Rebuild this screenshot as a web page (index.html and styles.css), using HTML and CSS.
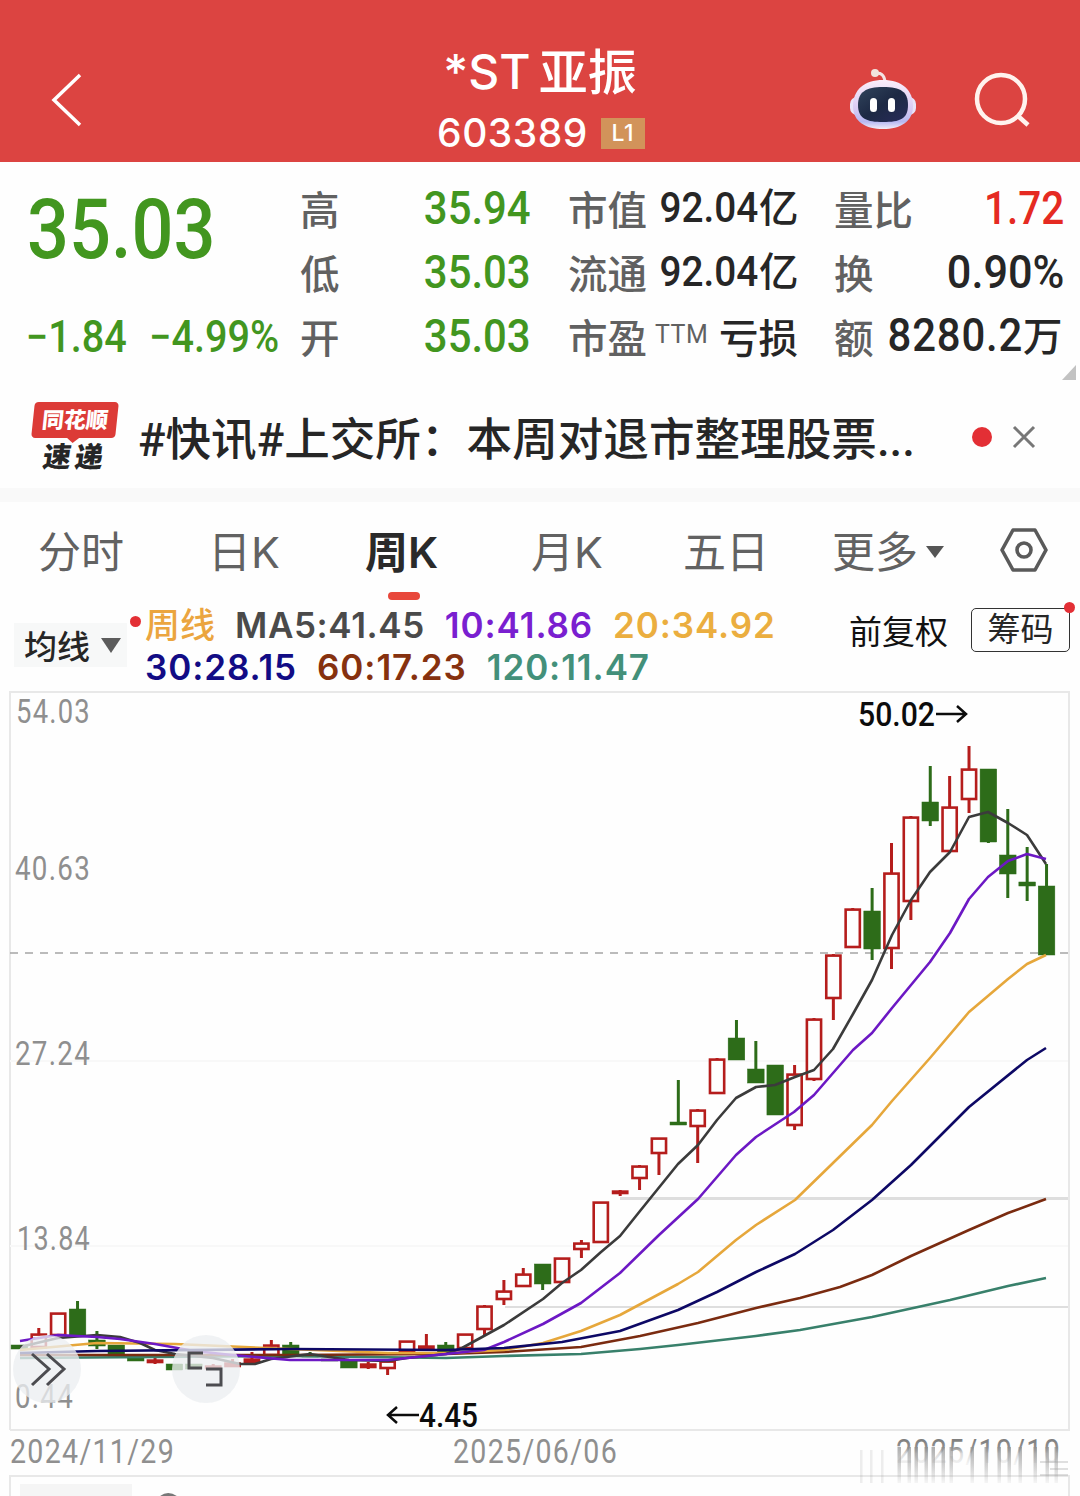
FILE: index.html
```html
<!DOCTYPE html>
<html lang="zh-CN">
<head>
    <meta charset="UTF-8">
    <meta name="viewport" content="width=device-width, initial-scale=1.0">
    <title>*ST亚振 603389</title>
    <link rel="stylesheet" href="styles.css">
</head>
<body>
    <div class="header">
        <svg class="back" width="34" height="56" viewBox="0 0 34 56"><path d="M30 3L4 28L30 53"/></svg>
        <div class="title">
            <div class="name"><span class="st">*ST</span><span class="han">亚振</span></div>
            <div class="code"><span>603389</span><span class="level">L1</span></div>
        </div>
        <div class="tools">
            <svg width="68" height="64" viewBox="0 0 68 64">
                <defs>
                    <linearGradient id="shell" x1="0" y1="0" x2="0" y2="1">
                        <stop offset="0" stop-color="#fbeefa"/>
                        <stop offset="0.6" stop-color="#d8c9f3"/>
                        <stop offset="0.85" stop-color="#b6b8f2"/>
                        <stop offset="1" stop-color="#f4eef8"/>
                    </linearGradient>
                    <linearGradient id="face" x1="0" y1="0" x2="1" y2="1">
                        <stop offset="0" stop-color="#31445c"/>
                        <stop offset="0.5" stop-color="#1d2944"/>
                        <stop offset="1" stop-color="#282b5a"/>
                    </linearGradient>
                </defs>
                <path d="M25 7Q35 4 36 15" fill="none" stroke="#f3e4e4" stroke-width="3"/>
                <circle cx="26" cy="6" r="4" fill="#f1e3dc"/>
                <rect x="1" y="30" width="66" height="18" rx="7" fill="#e9e3f8"/>
                <path d="M34 13C53 13 64 23 64 39C64 55 51 62 34 62C17 62 4 55 4 39C4 23 15 13 34 13Z" fill="url(#shell)"/>
                <path d="M34 20C52 20 59 25 59 38C59 52 51 55 34 55C18 55 9 52 9 38C9 25 17 20 34 20Z" fill="url(#face)"/>
                <rect x="21" y="31" width="7" height="14" rx="3.5" fill="#fff"/>
                <rect x="39" y="31" width="7" height="14" rx="3.5" fill="#fff"/>
            </svg>
            <svg class="search" width="58" height="58" viewBox="0 0 58 58">
                <circle cx="27" cy="27" r="24"/>
                <path d="M44 44L54 53"/>
            </svg>
        </div>
    </div>

    <div class="quote">
        <div class="price">
            <div class="last">35.03</div>
            <div class="change"><span>−1.84</span><span>−4.99%</span></div>
        </div>
        <div class="col">
            <div class="row"><label>高</label><b class="down">35.94</b></div>
            <div class="row"><label>低</label><b class="down">35.03</b></div>
            <div class="row"><label>开</label><b class="down">35.03</b></div>
        </div>
        <div class="col">
            <div class="row"><label>市值</label><b class="small">92.04<i>亿</i></b></div>
            <div class="row"><label>流通</label><b class="small">92.04<i>亿</i></b></div>
            <div class="row"><label>市盈<sup>TTM</sup></label><b class="small loss"><i>亏损</i></b></div>
        </div>
        <div class="col">
            <div class="row"><label>量比</label><b class="up">1.72</b></div>
            <div class="row"><label>换</label><b class="rate">0.90%</b></div>
            <div class="row"><label>额</label><b class="amount">8280.2<i>万</i></b></div>
        </div>
        <div class="corner"></div>
    </div>

    <div class="news">
        <div class="brand">
            <div class="brand-top">同花顺</div>
            <div class="brand-bottom">速递</div>
        </div>
        <div class="headline">#快讯#上交所：本周对退市整理股票...</div>
        <span class="dot"></span>
        <svg class="close" width="24" height="24" viewBox="0 0 24 24"><path d="M2 2L22 22M22 2L2 22"/></svg>
    </div>

    <div class="tabs">
        <span>分时</span>
        <span>日K</span>
        <span class="active">周K</span>
        <span>月K</span>
        <span>五日</span>
        <span>更多<em></em></span>
        <svg width="48" height="44" viewBox="0 0 48 44">
            <path d="M13 2H35L46 22L35 42H13L2 22Z"/>
            <circle cx="24" cy="22" r="7"/>
        </svg>
    </div>

    <div class="average">
        <div class="picker">均线<em></em><span class="dot"></span></div>
        <div class="values">
            <div class="line">
                <span class="period">周线</span>
                <span class="ma5">MA5:41.45</span>
                <span class="ma10">10:41.86</span>
                <span class="ma20">20:34.92</span>
            </div>
            <div class="line">
                <span class="ma30">30:28.15</span>
                <span class="ma60">60:17.23</span>
                <span class="ma120">120:11.47</span>
            </div>
        </div>
        <div class="adjust">前复权</div>
        <div class="chips">筹码<span class="dot"></span></div>
    </div>

    <svg class="chart" width="1080" height="806" viewBox="0 690 1080 806">
        <defs>
            <linearGradient id="date-fade" gradientUnits="userSpaceOnUse" x1="0" y1="1438" x2="0" y2="1464">
                <stop offset="0" stop-color="#7c7c7c"/>
                <stop offset="0.35" stop-color="#8f8f8f"/>
                <stop offset="0.6" stop-color="#8f8f8f" stop-opacity="0.3"/>
                <stop offset="1" stop-color="#8f8f8f" stop-opacity="0.1"/>
            </linearGradient>
            <linearGradient id="fade" x1="0" y1="0" x2="0" y2="1">
                <stop offset="0" stop-color="#8c8c8c" stop-opacity="0.7"/>
                <stop offset="0.5" stop-color="#8c8c8c" stop-opacity="0.4"/>
                <stop offset="1" stop-color="#8c8c8c" stop-opacity="0.08"/>
            </linearGradient>
        </defs>
        <g class="frame">
            <path d="M10 1430V692H1069V1430H10"/>
            <path d="M10 1496V1476H1069V1496"/>
        </g>
        <path class="grid faint" d="M10 1246H1068M10 1061H1068"/>
        <path class="grid" d="M620 1198.5H1068"/>
        <path class="grid thin" d="M505 1307H1068"/>
        <path class="current" d="M10 953H1068"/>
        <g id="candles"></g>
        <g id="lines"></g>
        <g class="axis">
            <text x="16" y="723" textLength="75" lengthAdjust="spacingAndGlyphs">54.03</text>
            <text x="15" y="880" textLength="76" lengthAdjust="spacingAndGlyphs">40.63</text>
            <text x="15" y="1065" textLength="76" lengthAdjust="spacingAndGlyphs">27.24</text>
            <text x="17" y="1250" textLength="74" lengthAdjust="spacingAndGlyphs">13.84</text>
            <text x="15" y="1408" textLength="59" lengthAdjust="spacingAndGlyphs">0.44</text>
            <text x="10" y="1463" textLength="165" lengthAdjust="spacingAndGlyphs">2024/11/29</text>
            <text x="453" y="1463" textLength="165" lengthAdjust="spacingAndGlyphs">2025/06/06</text>
            <text class="end-date" x="896" y="1463" textLength="165" lengthAdjust="spacingAndGlyphs">2025/10/10</text>
        </g>
        <g class="mark">
            <text x="858" y="726" textLength="77" lengthAdjust="spacingAndGlyphs">50.02</text>
            <text x="419" y="1427" textLength="59" lengthAdjust="spacingAndGlyphs">4.45</text>
            <path d="M936 714H965M957 706L966 714L957 722"/>
            <path d="M419 1415H389M397 1407L388 1415L397 1423"/>
        </g>
        <g id="streaks"></g>
        <path class="edge" d="M1040 1462H1068M1050 1469H1068M1040 1475H1068"/>
        <g class="control">
            <circle cx="47" cy="1369" r="34"/>
            <path d="M32 1354L49 1369L32 1385M47 1354L64 1369L47 1385"/>
            <circle cx="206" cy="1369" r="34"/>
            <path d="M203 1353H189V1368H202M206 1369H221V1385H206"/>
        </g>
        <rect class="tag" x="20" y="1484" width="112" height="12"/>
        <path class="peek" d="M160 1498Q168 1491 177 1498"/>
    </svg>

    <script>
        // high, body top, body bottom, low, rising
        const candles = [
            [1345, 1345, 1349, 1349, 0], [1328, 1334, 1347, 1347, 1], [1313, 1313, 1335, 1335, 1],
            [1301, 1309, 1335, 1335, 0], [1331, 1340, 1346, 1349, 0], [1345, 1345, 1356, 1356, 0],
            [1358, 1358, 1361, 1361, 0], [1355, 1360, 1362, 1364, 1], [1364, 1364, 1370, 1370, 0],
            [1364, 1364, 1369, 1369, 0], [1364, 1366, 1368, 1369, 1], [1359, 1363, 1366, 1366, 1],
            [1352, 1359, 1362, 1363, 1], [1340, 1345, 1355, 1355, 1], [1342, 1345, 1356, 1356, 0],
            [1352, 1355, 1357, 1357, 0], [1359, 1359, 1361, 1361, 0], [1361, 1361, 1368, 1368, 0],
            [1362, 1364, 1367, 1369, 1], [1361, 1361, 1368, 1375, 1], [1341, 1341, 1351, 1351, 1],
            [1334, 1346, 1348, 1348, 1], [1342, 1345, 1352, 1352, 0], [1334, 1334, 1348, 1348, 1],
            [1305, 1306, 1329, 1335, 1], [1280, 1291, 1299, 1305, 1], [1268, 1274, 1286, 1287, 1],
            [1264, 1264, 1284, 1290, 0], [1258, 1258, 1282, 1282, 1], [1240, 1243, 1249, 1258, 1],
            [1202, 1202, 1242, 1242, 1], [1190, 1191, 1193, 1196, 1], [1165, 1166, 1178, 1190, 1],
            [1138, 1138, 1153, 1175, 1], [1080, 1122, 1125, 1125, 0], [1109, 1110, 1126, 1163, 1],
            [1058, 1059, 1093, 1094, 1], [1020, 1038, 1060, 1060, 0], [1041, 1069, 1083, 1083, 0],
            [1065, 1065, 1115, 1115, 0], [1065, 1074, 1125, 1130, 1], [1018, 1019, 1079, 1081, 1],
            [954, 955, 998, 1020, 1], [908, 909, 947, 948, 1], [888, 911, 949, 960, 0],
            [843, 873, 948, 969, 1], [816, 817, 901, 920, 1], [766, 802, 821, 826, 0],
            [776, 807, 851, 852, 1], [746, 769, 799, 813, 1], [769, 769, 842, 843, 0],
            [809, 855, 874, 898, 0], [847, 882, 886, 901, 0], [864, 886, 955, 955, 0]
        ];
        const averages = {
            ma120: "20,1358 290,1356 446,1358 504,1356 581,1354 640,1349 678,1345 756,1336 800,1330 872,1317 950,1300 1008,1286 1046,1278",
            ma60: "20,1355 290,1355 446,1354 504,1352 581,1347 640,1336 698,1323 756,1308 800,1298 840,1287 872,1275 911,1256 969,1230 1008,1213 1046,1199",
            ma20: "20,1350 97,1343 175,1344 290,1349 388,1353 446,1353 504,1350 543,1343 581,1331 620,1315 678,1284 698,1272 736,1240 756,1225 795,1200 833,1163 872,1125 892,1101 930,1058 969,1012 1008,979 1027,964 1046,955",
            ma5: "20,1347 58,1338 97,1335 120,1337 140,1343 155,1350 175,1354 213,1358 240,1364 255,1364 271,1359 310,1354 349,1360 388,1361 407,1358 446,1354 462,1348 504,1325 543,1299 562,1283 581,1270 601,1252 620,1236 640,1211 678,1164 698,1145 717,1120 736,1098 756,1087 775,1085 795,1077 814,1070 833,1049 853,1014 872,980 892,935 911,900 930,872 950,852 969,817 988,812 1008,823 1027,835 1046,864",
            ma10: "20,1341 58,1335 97,1337 120,1339 155,1344 194,1351 232,1355 290,1360 388,1360 446,1354 484,1350 504,1342 543,1324 581,1303 620,1273 659,1235 698,1199 736,1155 756,1137 794,1112 814,1095 853,1050 872,1033 892,1008 930,962 950,933 969,899 988,877 1008,861 1027,854 1046,859",
            ma30: "20,1353 97,1351 290,1349 446,1350 504,1348 562,1342 620,1331 678,1310 717,1292 756,1272 795,1254 833,1230 872,1200 911,1165 969,1107 1027,1060 1046,1048"
        };

        let html = "";
        candles.forEach(([high, top, bottom, low, up], i) => {
            const x = 19.4 + i * 19.38;
            const inset = up ? 1.2 : 0;
            html += `<g class="${up ? "rise" : "fall"}"><path d="M${x} ${high}V${top}M${x} ${bottom}V${low}"/>` +
                `<rect x="${x - 8.3 + inset}" y="${top + inset / 2}" width="${16.6 - inset * 2}" height="${bottom - top - inset / 2}"/></g>`;
        });
        document.getElementById("candles").innerHTML = html;

        document.getElementById("lines").innerHTML = Object.entries(averages)
            .map(([name, points]) => `<polyline class="${name}" points="${points}"/>`).join("");

        // the end date fades out downwards behind the edge of the panel
        document.getElementById("streaks").innerHTML =
            [899, 909, 916, 926, 933, 943, 951, 972, 986, 999, 1009, 1020, 1035, 1047, 1056]
            .map(x => `<rect x="${x - 1.5}" y="1447" width="3.5" height="36" fill="url(#fade)"/>`).join("") +
            [861, 871, 882].map(x => `<rect x="${x - 1}" y="1450" width="2.5" height="33" fill="#8c8c8c" opacity="0.15"/>`).join("");
    </script>
</body>
</html>
```
FILE: styles.css
```css
body {
    margin: 0;
    width: 1080px;
    height: 1496px;
    overflow: hidden;
    background: #fefefe;
    font-family: Roboto, "Noto Sans CJK SC", sans-serif;
    color: #262626;
}
svg {
    display: block;
    flex: none;
}
.header {
    height: 162px;
    box-sizing: border-box;
    background: #dc4441;
    color: #fff;
    display: grid;
    grid-template-columns: 300px 1fr 300px;
    padding-top: 40px;
}
.back {
    margin: 32px 0 0 50px;
    fill: none;
    stroke: #fff;
    stroke-width: 3.5;
}
.title {
    font-family: Inter, "Noto Sans CJK SC", sans-serif;
}
.name {
    display: flex;
    justify-content: center;
    align-items: center;
    gap: 8px;
    height: 62px;
    line-height: 62px;
    font-size: 49px;
    font-weight: 500;
}
.st {
    font-size: 48px;
    margin-top: 2px;
}
.han {
    font-family: "Noto Sans CJK SC", sans-serif;
    margin-top: -5px;
}
.code {
    display: flex;
    justify-content: center;
    align-items: center;
    gap: 13px;
    height: 60px;
    padding: 1px 0 0 2px;
    font-size: 39px;
    font-weight: 500;
    letter-spacing: 0.5px;
    line-height: 60px;
}
.level {
    width: 44px;
    height: 31px;
    line-height: 31px;
    text-align: center;
    font-size: 23px;
    background: #d2935a;
}
.tools {
    display: flex;
    align-items: flex-start;
    gap: 57px;
    padding: 27px 0 0 69px;
}
.search {
    margin-top: 5px;
    fill: none;
    stroke: #fff3ee;
    stroke-width: 4.5;
}
.quote {
    position: relative;
    height: 226px;
    box-sizing: border-box;
    padding: 14px 16px 0 27px;
    display: grid;
    grid-template-columns: 273px 231px 230px 230px;
}
.quote .col:nth-child(3) {
    margin-left: 37px;
    margin-right: -37px;
}
.quote .col:nth-child(4) {
    margin-left: 73px;
    margin-right: -73px;
}
.price {
    color: #42961f;
    font-weight: 500;
}
.last {
    height: 128px;
    line-height: 107px;
    font-size: 84px;
    transform: scaleX(0.88);
    transform-origin: left;
}
.change {
    display: flex;
    gap: 25px;
    font-size: 44px;
    line-height: 66px;
    white-space: nowrap;
    transform: scaleX(0.9);
    transform-origin: left;
    margin-left: -1px;
}
.row {
    display: flex;
    justify-content: space-between;
    align-items: center;
    height: 64px;
    white-space: nowrap;
}
.row label {
    font-size: 39.5px;
    line-height: 56px;
    margin-top: 7px;
    font-weight: 500;
    color: #616161;
    display: flex;
}
.row sup {
    font-size: 25px;
    line-height: 46px;
    font-weight: 400;
    letter-spacing: 0.5px;
    margin-left: 8px;
}
/* narrow figures */
.row b {
    margin-left: -30px;
    font-size: 46.5px;
    line-height: 60px;
    font-weight: 500;
    transform: scaleX(0.9);
    transform-origin: right;
}
.row .small {
    font-size: 43px;
}
.row .loss {
    margin-top: 6px;
}
.row i {
    display: inline-block;
    font-style: normal;
    font-size: 39.5px;
    margin-left: 5px;
    transform: scaleX(1.11);
    transform-origin: right;
}
.row .down {
    color: #42961f;
}
.row .up {
    color: #e52a22;
    transform: scaleX(0.87);
}
.row .rate {
    transform: scaleX(0.93);
}
.row .amount {
    letter-spacing: 0.9px;
}
.corner {
    position: absolute;
    right: 4px;
    top: 203px;
    border-left: 14px solid transparent;
    border-bottom: 15px solid #c2c2c2;
}
.news {
    height: 100px;
    display: flex;
    align-items: center;
    padding-left: 33px;
    border-bottom: 14px solid #f9f9f9;
}
.brand {
    width: 84px;
    height: 72px;
    font-weight: 900;
}
.brand-top {
    position: relative;
    height: 36px;
    line-height: 37px;
    text-align: center;
    color: #fff;
    background: #dc3b37;
    border-radius: 4px;
    font-size: 22px;
    transform: skewX(-6deg);
}
.brand-top::after {
    content: "";
    position: absolute;
    left: 36px;
    top: 36px;
    border: 6px solid transparent;
    border-top: 5px solid #dc3b37;
    border-bottom: 0;
}
.brand-bottom {
    line-height: 40px;
    text-align: center;
    font-size: 28px;
    letter-spacing: 4px;
    transform: skewX(-8deg);
}
.headline {
    width: 800px;
    margin: -4px 0 0 21px;
    font-size: 45.6px;
    font-weight: 500;
    white-space: nowrap;
}
.dot {
    border-radius: 50%;
    background: #e32f35;
}
.news .dot {
    width: 20px;
    height: 20px;
    margin: -2px 0 0 34px;
}
.close {
    margin: -2px 0 0 20px;
    fill: none;
    stroke: #777;
    stroke-width: 3;
}
.tabs {
    position: relative;
    height: 96px;
    padding-bottom: 4px;
    display: grid;
    grid-template-columns: 170px 157px 166px 152px 149px 168px 48px;
    align-items: center;
    padding-left: 38px;
    font-size: 43px;
    font-family: Inter, "Noto Sans CJK SC", sans-serif;
    font-weight: 400;
    color: #626262;
    white-space: nowrap;
}
.tabs span {
    margin-top: -3px;
}
.tabs .active {
    font-weight: 600;
    color: #2a2a2a;
    position: relative;
}
.active::after {
    content: "";
    position: absolute;
    left: 23px;
    bottom: -20px;
    width: 32px;
    height: 8px;
    border-radius: 4px;
    background: #e8483b;
}
.tabs em {
    display: inline-block;
    vertical-align: 10px;
    margin-left: 8px;
    border: 9px solid transparent;
    border-top: 12px solid #555;
    border-bottom: 0;
}
.tabs svg {
    fill: none;
    stroke: #5a5a5a;
    stroke-width: 3.6;
    stroke-linejoin: round;
}
.average {
    height: 88px;
    display: flex;
    align-items: flex-start;
}
.picker {
    position: relative;
    width: 113px;
    height: 44px;
    margin: 21px 0 0 14px;
    padding-left: 10px;
    box-sizing: border-box;
    display: flex;
    align-items: center;
    gap: 11px;
    font-size: 33px;
    font-weight: 500;
    background: #f7f8f8;
}
.picker em {
    border: 10px solid transparent;
    border-top: 15px solid #5c5c5c;
    border-bottom: 0;
}
.picker .dot {
    position: absolute;
    right: -14px;
    top: -7px;
    width: 11px;
    height: 11px;
}
.values {
    width: 704px;
    margin-left: 18px;
    font-family: Inter, "Noto Sans CJK SC", sans-serif;
    font-size: 35px;
    font-weight: 600;
    letter-spacing: 0.9px;
}
.line {
    display: flex;
    gap: 20px;
    height: 42px;
    line-height: 46px;
    white-space: nowrap;
}
.line .period {
    color: #eba53f;
    font-weight: 500;
    letter-spacing: 0;
}
.line .ma5 {
    color: #4a4a4a;
    letter-spacing: 0.6px;
}
.line .ma10 {
    color: #7a1fd0;
}
.line .ma20 {
    color: #ebae3f;
}
.line .ma30 {
    color: #120c85;
}
.line .ma60 {
    color: #86310f;
}
.line .ma120 {
    color: #43907a;
}
.adjust {
    width: 122px;
    font-size: 33px;
    line-height: 61px;
    color: #111;
}
.chips {
    position: relative;
    width: 99px;
    height: 44px;
    box-sizing: border-box;
    margin-top: 6px;
    border: 1.5px solid #333;
    border-radius: 5px;
    text-align: center;
    line-height: 41px;
    font-size: 33px;
}
.chips .dot {
    position: absolute;
    right: -6px;
    top: -7px;
    width: 11px;
    height: 11px;
}
.chart path, .chart polyline {
    fill: none;
}
.frame path {
    stroke: #e8e8e8;
    stroke-width: 2;
}
.grid {
    stroke: #dedede;
    stroke-width: 3;
}
.thin {
    stroke-width: 2;
}
.faint {
    stroke: #f8f8f8;
    stroke-width: 2;
}
.current {
    stroke: #a5a5a5;
    stroke-width: 1.5;
    stroke-dasharray: 8 7;
}
.rise {
    fill: #fefefe;
    stroke: #b51d1c;
    stroke-width: 2.6;
}
.fall {
    fill: #2d6c19;
    stroke: #2d6c19;
}
.chart .rise path, .chart .fall path {
    stroke-width: 3;
}
.fall rect {
    stroke-width: 0.5;
}
#lines polyline {
    stroke-width: 2.6;
    stroke-linejoin: round;
}
#lines .ma5 {
    stroke: #3b3b3b;
}
#lines .ma10 {
    stroke: #6c18c4;
}
#lines .ma20 {
    stroke: #e6a73b;
}
#lines .ma30 {
    stroke: #0d0865;
}
#lines .ma60 {
    stroke: #7a2b10;
}
#lines .ma120 {
    stroke: #38806b;
}
.axis text {
    font-size: 33px;
    letter-spacing: 1.5px;
    fill: #8f8f8f;
}
.axis .end-date {
    fill: url(#date-fade);
}
.mark text {
    font-size: 34px;
    font-weight: 500;
    fill: #0c0c0c;
}
.mark path {
    stroke: #0c0c0c;
    stroke-width: 2.5;
}
.edge {
    stroke: #999;
    stroke-width: 2;
    opacity: 0.3;
}
.control circle {
    fill: #eceef1;
    opacity: 0.78;
}
.control path {
    stroke: #4c4c50;
    stroke-width: 3;
}
.tag {
    fill: #f5f5f5;
}
.peek {
    stroke: #777;
    stroke-width: 3;
}
```
